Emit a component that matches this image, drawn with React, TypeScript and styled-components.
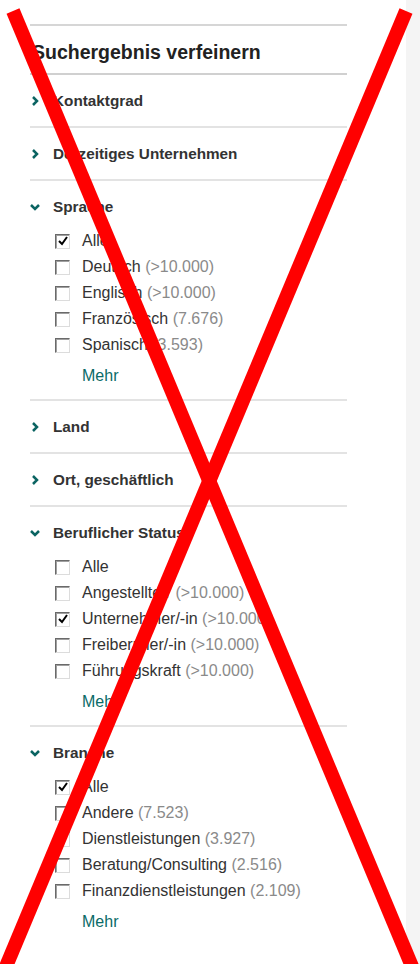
import React from 'react'
import { styled, createGlobalStyle } from 'styled-components'

const GlobalStyle = createGlobalStyle`
  html, body {
    margin: 0;
    padding: 0;
    background: #ffffff;
  }
  body {
    font-family: "Liberation Sans", Arial, sans-serif;
  }
`

type Item = {
  label: string
  count?: string
  checked?: boolean
}

type Section = {
  title: string
  open?: boolean
  items?: Item[]
}

const sections: Section[] = [
  { title: 'Kontaktgrad' },
  { title: 'Derzeitiges Unternehmen' },
  {
    title: 'Sprache',
    open: true,
    items: [
      { label: 'Alle', checked: true },
      { label: 'Deutsch', count: '(>10.000)' },
      { label: 'Englisch', count: '(>10.000)' },
      { label: 'Französisch', count: '(7.676)' },
      { label: 'Spanisch', count: '(3.593)' },
    ],
  },
  { title: 'Land' },
  { title: 'Ort, geschäftlich' },
  {
    title: 'Beruflicher Status',
    open: true,
    items: [
      { label: 'Alle' },
      { label: 'Angestellte/r', count: '(>10.000)' },
      { label: 'Unternehmer/-in', count: '(>10.000)', checked: true },
      { label: 'Freiberufler/-in', count: '(>10.000)' },
      { label: 'Führungskraft', count: '(>10.000)' },
    ],
  },
  {
    title: 'Branche',
    open: true,
    items: [
      { label: 'Alle', checked: true },
      { label: 'Andere', count: '(7.523)' },
      { label: 'Dienstleistungen', count: '(3.927)' },
      { label: 'Beratung/Consulting', count: '(2.516)' },
      { label: 'Finanzdienstleistungen', count: '(2.109)' },
    ],
  },
]

const Chevron = ({ open }: { open?: boolean }) => (
  <StyledChevron width="10" height="10" viewBox="0 0 10 10">
    {open ? (
      <polyline points="1,3 5,7 9,3" fill="none" stroke="#0b6462" strokeWidth="2.5" />
    ) : (
      <polyline points="3,1 7,5 3,9" fill="none" stroke="#0b6462" strokeWidth="2.5" />
    )}
  </StyledChevron>
)

const App = () => {
  return (
    <StyledPage>
      <GlobalStyle />
      <StyledMain>
        <StyledPanel>
          <StyledHeading>{`Suchergebnis verfeinern`}</StyledHeading>
          {sections.map((s, i) => (
            <StyledSection key={s.title} $first={i === 0}>
              <StyledSectionHeader>
                <Chevron open={s.open} />
                <StyledSectionTitle>{s.title}</StyledSectionTitle>
              </StyledSectionHeader>
              {s.open && s.items && (
                <StyledList>
                  {s.items.map((it) => (
                    <StyledRow key={it.label}>
                      <StyledBox>
                        {it.checked && (
                          <svg width="10" height="10" viewBox="0 0 10 10">
                            <polyline points="1,5 4,8 9,1" fill="none" stroke="#000" strokeWidth="2" />
                          </svg>
                        )}
                      </StyledBox>
                      <StyledLabel>
                        {it.label}
                        {it.count && <StyledCount>{` ${it.count}`}</StyledCount>}
                      </StyledLabel>
                    </StyledRow>
                  ))}
                  <StyledMore href="#">{`Mehr`}</StyledMore>
                </StyledList>
              )}
            </StyledSection>
          ))}
        </StyledPanel>
      </StyledMain>
      <StyledGutter />
      <StyledCross width="420" height="964" viewBox="0 0 420 964">
        <line x1="13" y1="11" x2="416" y2="976" stroke="#ff0000" strokeWidth="14" />
        <line x1="406" y1="11" x2="2" y2="976" stroke="#ff0000" strokeWidth="14" />
      </StyledCross>
    </StyledPage>
  )
}

const StyledPage = styled.div`
  position: relative;
  display: flex;
  width: 420px;
  height: 964px;
  overflow: hidden;
`

const StyledMain = styled.div`
  flex: 1;
  padding: 24px 0 0 30px;
`

const StyledGutter = styled.div`
  width: 14px;
  background: #f4f4f4;
`

const StyledPanel = styled.div`
  width: 317px;
  border-top: 2px solid #d6d6d6;
`

const StyledHeading = styled.h2`
  margin: 0;
  padding: 14px 0 9px 2px;
  line-height: 24px;
  font-size: 19.5px;
  font-weight: 700;
  color: #222;
  border-bottom: 2px solid #d0d0d0;
`

const StyledSection = styled.div<{ $first?: boolean }>`
  border-top: ${(p) => (p.$first ? 'none' : '2px solid #e3e3e3')};
`

const StyledSectionHeader = styled.div`
  display: flex;
  align-items: center;
  height: 51px;
`

const StyledChevron = styled.svg`
  width: 10px;
  height: 10px;
  flex-shrink: 0;
`

const StyledSectionTitle = styled.span`
  margin-left: 13px;
  font-size: 15.3px;
  font-weight: 700;
  color: #333;
`

const StyledList = styled.div`
  margin-top: -4px;
  padding: 0 0 10px 25px;
`

const StyledRow = styled.div`
  display: flex;
  align-items: center;
  height: 26px;
`

const StyledBox = styled.span`
  display: flex;
  align-items: center;
  justify-content: center;
  width: 13px;
  height: 13px;
  background: #fff;
  border-top: 1px solid #6a6a6a;
  border-left: 1px solid #6a6a6a;
  border-right: 1px solid #dcdcdc;
  border-bottom: 1px solid #dcdcdc;
  box-shadow: inset 1px 1px 0 #a0a0a0;
`

const StyledLabel = styled.span`
  margin-left: 12px;
  font-size: 16px;
  color: #333;
`

const StyledCount = styled.span`
  color: #8a8a8a;
`

const StyledMore = styled.a`
  display: block;
  margin: 5px 0 0 27px;
  line-height: 26px;
  font-size: 16px;
  color: #0a6b68;
  text-decoration: none;
`

const StyledCross = styled.svg`
  position: absolute;
  top: 0;
  left: 0;
  pointer-events: none;
`

export default App
